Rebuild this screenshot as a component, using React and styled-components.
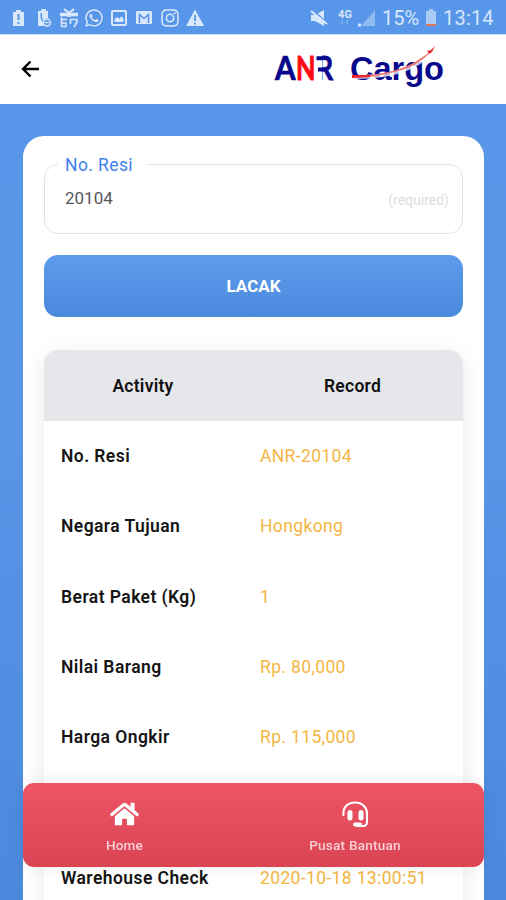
import React from "react";
import styled, { createGlobalStyle } from "styled-components";
import { FaHome, FaWhatsapp, FaInstagram } from "react-icons/fa";

const GlobalStyle = createGlobalStyle`
  * {
    box-sizing: border-box;
  }

  body {
    margin: 0;
    font-family: Roboto, "Liberation Sans", sans-serif;
    background: #5692e3;
  }
`;

const Screen = styled.div`
  height: 900px;
  overflow: hidden;
  background: linear-gradient(180deg, #5796e8 0%, #5895e7 50%, #4b89dc 100%);
`;

const StatusBar = styled.div`
  display: flex;
  align-items: center;
  justify-content: space-between;
  height: 34px;
  padding: 1px 11px 0 8px;
  background: #5796e8;
  color: #d9e8fb;
`;

const Notifications = styled.div`
  display: flex;
  align-items: center;

  svg {
    width: 20px;
    height: 20px;
    margin-right: 5.3px;
  }
`;

const Indicators = styled.div`
  display: flex;
  align-items: center;
  font-size: 20px;
  line-height: 34px;
`;

const Percent = styled.span`
  width: 43px;
  margin-left: -2px;
  letter-spacing: 0;
`;

const Clock = styled.span`
  margin-left: 6px;
  width: 52px;
  letter-spacing: 0.2px;
`;

const Header = styled.header`
  display: flex;
  align-items: center;
  justify-content: space-between;
  height: 70px;
  padding: 0 60px 2px 20px;
  background: #fff;
  border-top: 1px solid #c8e0fc;
`;

const BackButton = styled.button`
  display: flex;
  width: 22px;
  height: 22px;
  padding: 0;
  border: 0;
  background: none;
`;

const Card = styled.main`
  height: 800px;
  margin: 31.5px 22px 0 23px;
  padding: 28px 21px 0;
  border-radius: 21px;
  background: #fff;
`;

const Field = styled.div`
  display: flex;
  align-items: center;
  justify-content: space-between;
  position: relative;
  height: 70.5px;
  padding: 0 13px 0 20px;
  border: 1px solid #e2e3e6;
  border-radius: 14px;
`;

const Label = styled.label`
  position: absolute;
  top: -11px;
  left: 13px;
  padding: 0 14px 0 7px;
  background: #fff;
  color: #3f80ee;
  font-size: 17.5px;
  line-height: 22px;
  letter-spacing: 0.4px;
`;

const Value = styled.span`
  padding-bottom: 2px;
  color: #55575b;
  font-size: 17px;
  line-height: 20px;
`;

const Required = styled.em`
  padding-top: 3px;
  color: #dcdee1;
  font-size: 14px;
  font-style: normal;
`;

const Submit = styled.button`
  display: block;
  width: 100%;
  height: 61.5px;
  margin: 21px 0 33.5px;
  padding: 0;
  border: 0;
  border-radius: 14px;
  background: linear-gradient(180deg, #5d9cec, #4a89dc);
  color: #fff;
  font-family: inherit;
  font-size: 17px;
  font-weight: 700;
`;

const Table = styled.section`
  height: 640px;
  border-radius: 14px 14px 0 0;
  box-shadow: 0 4px 22px rgba(0, 0, 0, 0.09);
`;

const TableHead = styled.div`
  display: grid;
  grid-template-columns: 198px 1fr;
  align-items: center;
  height: 70.5px;
  padding-top: 1px;
  border-radius: 14px 14px 0 0;
  background: #e6e7eb;
  color: #111;
  font-size: 17.5px;
  font-weight: 600;
  letter-spacing: 0.25px;
  text-align: center;
`;

const Row = styled.div`
  display: grid;
  grid-template-columns: 199px 1fr;
  align-items: center;
  height: 70.3px;
  padding: 1px 0 0 17px;
  font-size: 17.5px;
`;

const Name = styled.span`
  color: #151515;
  font-weight: 600;
  letter-spacing: 0.43px;
`;

const Record = styled.span`
  color: #f4b644;
  letter-spacing: 0.36px;
`;

const Footer = styled.nav`
  position: fixed;
  top: 782.5px;
  left: 23px;
  display: grid;
  grid-template-columns: 203px 1fr;
  width: 461px;
  height: 84px;
  border-radius: 11px;
  background: linear-gradient(180deg, #ed5565, #da4453);
  box-shadow: 0 0 18px rgba(0, 0, 0, 0.07);
`;

const FooterItem = styled.a`
  display: flex;
  flex-direction: column;
  align-items: center;
  gap: 8px;
  padding-top: 17px;
  color: #fff;

  svg {
    width: 29px;
    height: 28px;
  }
`;

const FooterText = styled.span`
  color: #fbd0d4;
  font-size: 13.5px;
  font-weight: 500;
  line-height: 18px;
  letter-spacing: 0.25px;
`;

const BatteryAlert = () => (
  <svg viewBox="0 0 20 20">
    <path d="M5 4h3V2h5v2h3v14H5z" fill="currentColor" />
    <path d="M10.5 6v6M10.5 14v2" stroke="#5796e8" strokeWidth="2" />
  </svg>
);

const BatterySaver = () => (
  <svg viewBox="0 0 20 20">
    <path d="M5 3h3V1h5v2h2v7a5 5 0 0 0-4 8H5z" fill="currentColor" />
    <path d="M8.5 5c-1 4 0 7 3 10" stroke="#5796e8" strokeWidth="1.5" fill="none" />
    <circle cx="14" cy="14.5" r="3.5" fill="none" stroke="currentColor" strokeWidth="1.5" />
    <path d="M12 14.5h4" stroke="currentColor" strokeWidth="1.3" />
  </svg>
);

const Gift = () => (
  <svg viewBox="0 0 20 20" fill="none" stroke="currentColor">
    <path d="M1 6.5h18M10 4v5" strokeWidth="3.4" />
    <path d="M10 5L5 1M10 5l5-4" strokeWidth="2.2" />
    <path d="M2.5 9v10M2 11.5h6M3 15h4v3.5H3M11 11.5h7v2.5l-3 5M11.5 11v5" strokeWidth="1.6" />
  </svg>
);

const Picture = () => (
  <svg viewBox="0 0 20 20">
    <rect x="3" y="3" width="14" height="14" rx="1" fill="none" stroke="currentColor" strokeWidth="2" />
    <path d="M5.5 14v-3l3-2 2 2 2-3 2 3v3z" fill="currentColor" />
  </svg>
);

const Gmail = () => (
  <svg viewBox="0 0 20 20">
    <rect x="2" y="3" width="16" height="13" rx="1" fill="currentColor" />
    <path d="M5.5 15V6.5l4.5 4 4.5-4V15" fill="none" stroke="#5796e8" strokeWidth="1.6" />
  </svg>
);

const Warning = () => (
  <svg viewBox="0 0 20 20">
    <path d="M10 1.5 19 18H1z" fill="currentColor" />
    <path d="M10 7v6M10 14.5v2" stroke="#5796e8" strokeWidth="1.8" />
  </svg>
);

const Signal = () => (
  <svg width="74" height="22" viewBox="0 0 74 22">
    <path d="M1 8h4l9-5v16L5 14H1z" fill="currentColor" />
    <path d="M1 2l16 14" stroke="#5796e8" strokeWidth="2" />
    <path d="M1 4l16 13" stroke="currentColor" strokeWidth="2" />
    <text x="28" y="11" fill="currentColor" fontSize="11" fontWeight="700" textLength="14">4G</text>
    <path d="M32 13v4M37 13v4" stroke="#86b4f0" strokeWidth="1.4" />
    <path d="M65 3v16H51z" fill="#8ebbf2" />
    <path d="M48 16.5h3v3h-3z" fill="currentColor" />
  </svg>
);

const Battery = () => (
  <svg width="12" height="18" viewBox="0 0 12 18">
    <path d="M1 2h3V0h4v2h3v15H1z" fill="#a9cbf5" />
    <path d="M1 15h10v2H1z" fill="#e47555" />
  </svg>
);

const Logo = () => (
  <svg width="172" height="50" viewBox="0 0 172 50">
    <g fontFamily="Lato, sans-serif" fontWeight="700" fontSize="32.5">
      <text x="42.5" y="36" fill="#08088c" stroke="#08088c" strokeWidth="1" textLength="16.5" lengthAdjust="spacingAndGlyphs">R</text>
      {/* the stem of the R is left out, only its bars reach the N */}
      <path d="M41 11h7.3v27H41z" fill="#fff" />
      <path d="M42.5 12.2h7v4h-7zM44 23.5h6v4h-6z" fill="#08088c" />
      <text x="1" y="36" fill="#08088c" stroke="#08088c" strokeWidth="0.7" textLength="20.5" lengthAdjust="spacingAndGlyphs">A</text>
      <text x="22" y="36" fill="#ff0a12" stroke="#ff0a12" strokeWidth="0.9" textLength="19.5" lengthAdjust="spacingAndGlyphs">N</text>
    </g>
    <text x="76" y="36" fill="#08088c" fontFamily="Liberation Sans, sans-serif" fontWeight="700" fontSize="33" textLength="94" lengthAdjust="spacingAndGlyphs">Cargo</text>
    <path d="M77 31Q134 32 156 9l3-1Q138 36 77 35z" fill="#fff" fillOpacity="0.75" />
    <path d="M79 31Q103 32 122 26Q143 20 160 4Q146 22 122 27.5Q101 34 79 34z" fill="#ee7478" />
    <path d="M78 31h18v2l-18 1z" fill="#ed242c" />
    <path d="M153 7l4-1 4-4-3 6-3 2-1-2z" fill="#e52b32" />
  </svg>
);

const Headset = () => (
  <svg viewBox="0 0 29 28" fill="none" stroke="currentColor" strokeLinecap="round">
    <path d="M2.5 15C1.5 7 7 2.5 14 2.5S26 7 26 14v8c0 3-1 4-4 4h-6" strokeWidth="2.1" />
    <path d="M9 12.5v5.5M20 12.5v5.5" strokeWidth="5" />
    <path d="M14 24.5h5" strokeWidth="4" />
  </svg>
);

const rows = [
  ["No. Resi", "ANR-20104"],
  ["Negara Tujuan", "Hongkong"],
  ["Berat Paket (Kg)", "1"],
  ["Nilai Barang", "Rp. 80,000"],
  ["Harga Ongkir", "Rp. 115,000"],
  ["", ""],
  ["Warehouse Check", "2020-10-18 13:00:51"],
];

const App = () => {
  return (
    <Screen>
      <GlobalStyle />
      <StatusBar>
        <Notifications>
          <BatteryAlert />
          <BatterySaver />
          <Gift />
          <FaWhatsapp />
          <Picture />
          <Gmail />
          <FaInstagram />
          <Warning />
        </Notifications>
        <Indicators>
          <Signal />
          <Percent>15%</Percent>
          <Battery />
          <Clock>13:14</Clock>
        </Indicators>
      </StatusBar>
      <Header>
        <BackButton aria-label="Back">
          <svg width="22" height="22" viewBox="0 0 22 22" fill="none" stroke="#000" strokeWidth="2.4">
            <path d="M19 11H4M10.5 3.5 3 11l7.5 7.5" />
          </svg>
        </BackButton>
        <Logo />
      </Header>
      <Card>
        <Field>
          <Label>No. Resi</Label>
          <Value>20104</Value>
          <Required>(required)</Required>
        </Field>
        <Submit>LACAK</Submit>
        <Table>
          <TableHead>
            <span>Activity</span>
            <span>Record</span>
          </TableHead>
          {rows.map(([name, record], i) => (
            <Row key={i}>
              <Name>{name}</Name>
              <Record>{record}</Record>
            </Row>
          ))}
        </Table>
      </Card>
      <Footer>
        <FooterItem>
          <FaHome />
          <FooterText>Home</FooterText>
        </FooterItem>
        <FooterItem>
          <Headset />
          <FooterText>Pusat Bantuan</FooterText>
        </FooterItem>
      </Footer>
    </Screen>
  );
};

export default App;
